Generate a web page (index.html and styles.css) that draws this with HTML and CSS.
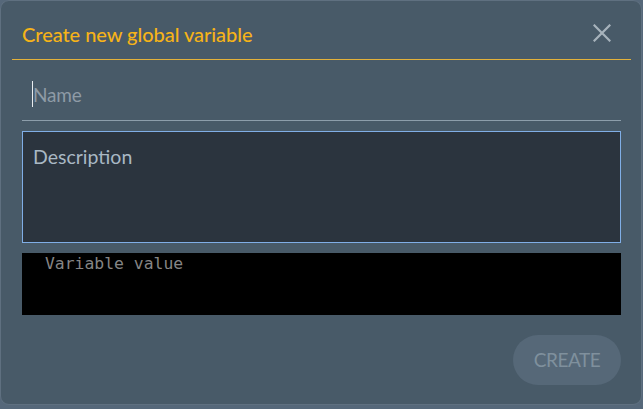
FILE: index.html
```html
<!DOCTYPE html>
<html>
<head>
<meta charset="utf-8">
<link rel="stylesheet" href="styles.css">
</head>
<body>
<div class="dialog">
  <div class="header">
    <h1 class="title">Create new global variable</h1>
    <button class="close" aria-label="Close">
      <svg width="18" height="18" viewBox="0 0 18 18"><path d="M1.5 1.5 L16.5 16.5 M16.5 1.5 L1.5 16.5" stroke="#a7b3bc" stroke-width="2.2" stroke-linecap="square" fill="none"/></svg>
    </button>
  </div>
  <div class="body">
    <div class="name-field"><span class="caret"></span><span class="placeholder">Name</span></div>
    <div class="desc-field"><span class="placeholder">Description</span></div>
    <div class="code-field"><span class="code-ph">Variable value</span></div>
    <div class="actions"><button class="create">CREATE</button></div>
  </div>
</div>
</body>
</html>
```
FILE: styles.css
```css
html, body { margin: 0; padding: 0; }
body {
  background: #56687a; width: 643px; height: 409px; overflow: hidden;
  font-family: Lato, "Open Sans", sans-serif;
}
.dialog {
  box-sizing: border-box;
  width: 642px; height: 405px;
  background: #485a68;
  border: 1px solid #5f7080;
  border-radius: 9px;
  display: flex; flex-direction: column;
}
.header {
  margin: 0 10px 0 11px;
  border-bottom: 1px solid #e3b13a;
  display: flex; align-items: center; justify-content: space-between;
  padding: 6px 20px 0 10px;
  box-sizing: border-box;
  height: 59px;
}
.title {
  margin: 0; font-weight: 500; font-size: 20px; line-height: 24px; color: #f6b318;
  letter-spacing: -0.05px; padding-top: 1px;
}
.close { background: none; border: 0; padding: 0; width: 18px; height: 18px; display: flex; }
.body { padding: 0 20px 0 21px; display: flex; flex-direction: column; }
.name-field {
  height: 61px; box-sizing: border-box; border-bottom: 1px solid #8d9eab;
  display: flex; align-items: center; padding: 9px 0 0 11px; position: relative;
}
.caret { width: 1px; height: 26px; background: #e8ecef; position: absolute; left: 10px; top: 21px; }
.placeholder { color: #8e9ba6; font-size: 19.5px; line-height: 24px; }
.name-field .placeholder { font-size: 19px; letter-spacing: -0.2px; }
.desc-field {
  margin-top: 10px; height: 112px; box-sizing: border-box;
  border: 1px solid #80aee6; background: #2b343e;
  padding: 13px 10px 12px 10px;
}
.desc-field .placeholder { color: #a9b8c4; }
.code-field { margin-top: 10px; height: 62px; background: #000; padding: 0 23px; box-sizing: border-box; }
.code-ph { font-family: "DejaVu Sans Mono", monospace; font-size: 16.4px; color: #858585; line-height: 20px; }
.actions { display: flex; justify-content: flex-end; margin-top: 20px; }
.create {
  width: 108px; height: 50px; border-radius: 25px; border: 0; padding: 0 0 1px;
  background: #566878; color: #7f909d; font-family: inherit; font-size: 19px; line-height: 22px;
  letter-spacing: -0.5px;
}
```
